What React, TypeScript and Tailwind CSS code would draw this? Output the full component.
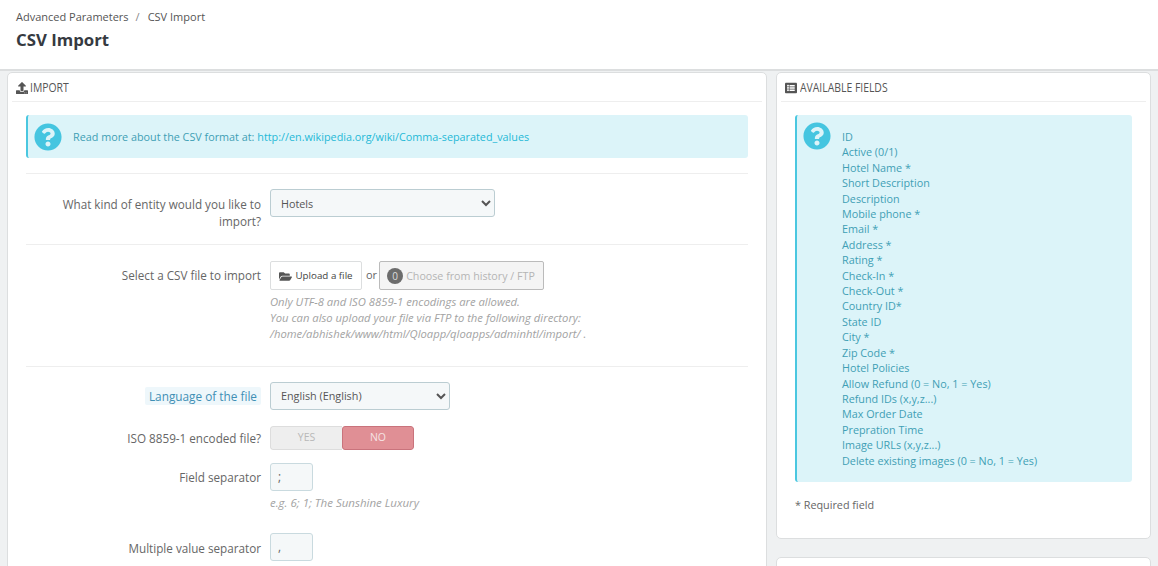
import { FaFolderOpen, FaListAlt, FaQuestionCircle, FaUpload } from 'react-icons/fa'
import type { ReactNode } from 'react'

const fields = [
  'ID',
  'Active (0/1)',
  'Hotel Name *',
  'Short Description',
  'Description',
  'Mobile phone *',
  'Email *',
  'Address *',
  'Rating *',
  'Check-In *',
  'Check-Out *',
  'Country ID*',
  'State ID',
  'City *',
  'Zip Code *',
  'Hotel Policies',
  'Allow Refund (0 = No, 1 = Yes)',
  'Refund IDs (x,y,z...)',
  'Max Order Date',
  'Prepration Time',
  'Image URLs (x,y,z...)',
  'Delete existing images (0 = No, 1 = Yes)',
]

function PanelHeading({ icon, children }: { icon: ReactNode; children: ReactNode }) {
  return (
    <div className="mx-[4px] flex h-[29px] items-center gap-[3px] border-b border-[#eeeeee] pl-[4px] pt-[1px] text-[#555555]">
      {icon}
      <span className="origin-left scale-x-[0.8] whitespace-nowrap text-[13px] leading-none">{children}</span>
    </div>
  )
}

function Label({ children }: { children: ReactNode }) {
  return <div className="w-[235px] shrink-0 text-right text-[11.7px] leading-[17px] text-[#666666]">{children}</div>
}

export default function App() {
  return (
    <div className="h-[566px] overflow-hidden bg-[#eff1f2] font-['Open_Sans',sans-serif]">
      <header className="h-[71px] border-b-2 border-[#dcdedf] bg-white px-[16px] pt-[9px]">
        <div className="flex items-center text-[11px] leading-[15px] text-[#555555]">
          <span>Advanced Parameters</span>
          <span className="ml-[7px] mr-[8px] text-[#888888]">/</span>
          <span>CSV Import</span>
        </div>
        <h1 className="mt-[5px] text-[16.8px] font-bold leading-[22px] text-[#363a41]">CSV Import</h1>
      </header>

      <div className="flex items-start gap-[9px] pl-[7px] pr-[7px] pt-[1px]">
        <section className="h-[600px] w-[760px] shrink-0 rounded-[5px] border border-[#dcdedf] bg-white">
          <PanelHeading icon={<FaUpload className="-mr-[1px] size-[12px]" />}>IMPORT</PanelHeading>
          <div className="px-[18px] pt-[13px]">
            <div className="flex h-[43px] items-center rounded-[3px] border-l-[2px] border-[#4ac7e0] bg-[#dcf4f9] pl-[6px] text-[10.8px] text-[#3f9fb5]">
              <FaQuestionCircle className="size-[28px] text-[#45c5e0]" />
              <span className="ml-[11px] pt-[2px]">
                Read more about the CSV format at:{' '}
                <span className="text-[#25b9d7]">http://en.wikipedia.org/wiki/Comma-separated_values</span>
              </span>
            </div>

            <div className="mt-[15px] flex h-[71px] gap-[9px] border-t border-[#eeeeee] pt-[15px]">
              <div className="pt-[7px]">
                <Label>What kind of entity would you like to import?</Label>
              </div>
              <select className="h-[28px] w-[225px] rounded-[3px] border border-[#bbcdd2] bg-[#f5f8f9] pl-[6px] text-[10.8px] text-[#555555]">
                <option>Hotels</option>
              </select>
            </div>

            <div className="flex h-[122px] gap-[9px] border-t border-[#eeeeee] pt-[16px]">
              <div className="pt-[6px]">
                <Label>Select a CSV file to import</Label>
              </div>
              <div>
                <div className="flex items-center text-[11px] text-[#666666]">
                  <div className="flex h-[29px] w-[92px] items-center justify-center gap-[3px] rounded-[2px] border border-[#dcdedf] bg-white pt-[1px] text-[9.8px] text-[#444444]">
                    <FaFolderOpen className="size-[13px] text-[#555555]" />
                    <span>Upload a file</span>
                  </div>
                  <span className="ml-[4px] mr-[2px]">or</span>
                  <div className="flex h-[29px] w-[165px] items-center gap-[3px] rounded-[2px] border border-[#bbbbbb] bg-[#f4f4f4] pl-[7px] pt-[1px] text-[#b5b5b5]">
                    <span className="flex size-[16px] items-center justify-center rounded-full bg-[#6c6c6c] text-[10px] text-[#dddddd]">
                      0
                    </span>
                    <span className="whitespace-nowrap text-[10.7px]">Choose from history / FTP</span>
                  </div>
                </div>
                <p className="mt-[4px] whitespace-nowrap text-[11.25px] italic leading-[16px] text-[#a3a3a3]">
                  Only UTF-8 and ISO 8859-1 encodings are allowed.
                  <br />
                  You can also upload your file via FTP to the following directory:
                  <br />
                  /home/abhishek/www/html/Qloapp/qloapps/adminhtl/import/ .
                </p>
              </div>
            </div>

            <div className="flex flex-col border-t border-[#eeeeee] pt-[15px]">
              <div className="flex items-center gap-[9px]">
                <div className="w-[235px] shrink-0 pb-[2px] text-right">
                  <span className="rounded-[2px] bg-[#eef7fb] px-[4px] py-[1px] text-[11.8px] text-[#3f8fb5]">
                    Language of the file
                  </span>
                </div>
                <select className="h-[28px] w-[180px] rounded-[3px] border border-[#bbcdd2] bg-[#f5f8f9] pb-[2px] pl-[6px] text-[10.8px] text-[#555555]">
                  <option>English (English)</option>
                </select>
              </div>

              <div className="mt-[16px] flex items-center gap-[9px]">
                <Label>ISO 8859-1 encoded file?</Label>
                <div className="flex h-[24px] w-[144px] overflow-hidden rounded-[3px] text-[10.5px]">
                  <div className="flex w-[72px] items-center justify-center rounded-l-[3px] border border-r-0 border-[#dddddd] bg-[#eeeeee] text-[#b8b8b8]">
                    YES
                  </div>
                  <div className="flex w-[72px] items-center justify-center rounded-[3px] border border-[#c9737c] bg-[#e08f95] text-[#f6e3e4]">
                    NO
                  </div>
                </div>
              </div>

              <div className="mt-[13px] flex items-center gap-[9px]">
                <Label>Field separator</Label>
                <div className="flex h-[28px] w-[43px] items-center rounded-[3px] border border-[#c9dadf] bg-[#f5f8f9] pl-[7px] text-[12px] text-[#666666]">
                  ;
                </div>
              </div>
              <p className="ml-[244px] mt-[4px] text-[11.5px] italic leading-[16px] text-[#a3a3a3]">
                e.g. 6; 1; The Sunshine Luxury
              </p>

              <div className="mt-[22px] flex items-center gap-[9px]">
                <div className="pt-[2px]">
                  <Label>Multiple value separator</Label>
                </div>
                <div className="flex h-[28px] w-[43px] items-center rounded-[3px] border border-[#c9dadf] bg-[#f5f8f9] pl-[7px] text-[12px] text-[#666666]">
                  ,
                </div>
              </div>
            </div>
          </div>
        </section>

        <div className="flex w-[375px] shrink-0 flex-col gap-[18px]">
          <section className="h-[467px] rounded-[5px] border border-[#dcdedf] bg-white">
            <PanelHeading icon={<FaListAlt className="size-[12px]" />}>AVAILABLE FIELDS</PanelHeading>
            <div className="px-[18px] pt-[13px]">
              <div className="flex h-[367px] rounded-[3px] border-l-[2px] border-[#4ac7e0] bg-[#dcf4f9] pl-[6px] pt-[7px]">
                <FaQuestionCircle className="size-[28px] shrink-0 text-[#45c5e0]" />
                <ul className="ml-[11px] pt-[7px] text-[10.8px] leading-[15.4px] text-[#3f9fb5]">
                  {fields.map((f) => (
                    <li key={f}>{f}</li>
                  ))}
                </ul>
              </div>
              <p className="mt-[15px] text-[10.8px] leading-[15px] text-[#666666]">* Required field</p>
            </div>
          </section>
          <section className="h-[40px] rounded-[5px] border border-[#dcdedf] bg-white" />
        </div>
      </div>
    </div>
  )
}
